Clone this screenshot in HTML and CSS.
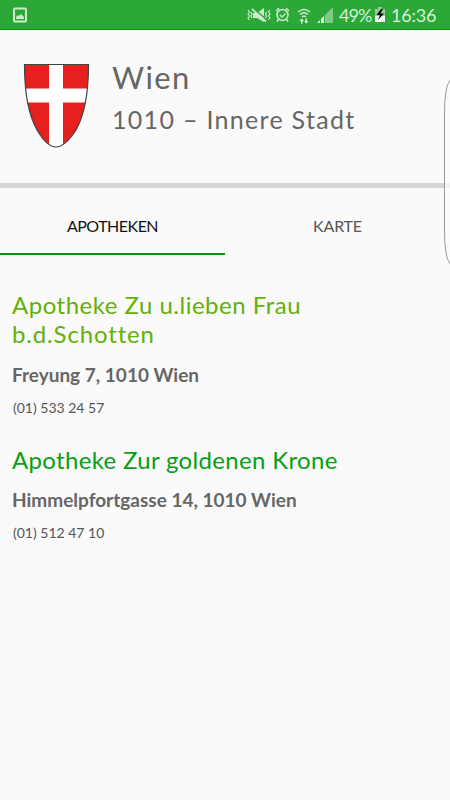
FILE: index.html
```html
<!DOCTYPE html>
<html lang="de">
<head>
<meta charset="utf-8">
<title>Apotheken Wien</title>
<link rel="stylesheet" href="styles.css">
</head>
<body>
<div class="statusbar">
  <svg class="i-pic" width="16" height="18" viewBox="0 0 16 18"><rect x="2" y="2.500" width="12" height="13" rx="1" fill="none" stroke="#cbeccb" stroke-width="2"/><path d="M4 13v-2l2-2 1 1 2-2 3 3v2z" fill="#cbeccb"/></svg>
  <div class="status-right">
    <svg width="24" height="16" viewBox="0 0 24 16" fill="#cbeccb"><path d="M6 6h4l7-5v14l-7-4H6z"/><path d="M5.500 .5L20 13" stroke="#2ba838" stroke-width="1.500"/><path d="M5 2l14 12.500" stroke="#cbeccb" stroke-width="1.700"/><path d="M1 3l1.500 2L1 7l1.500 2L1 11l1.500 2M4 5l1 2-1 2 1 2M22.500 3L21.500 5l1.500 2-1.500 2 1.500 2-1.500 2M19.500 5l-1 2 1 2-1 2" fill="none" stroke="#cbeccb" stroke-width="1.200"/></svg>
    <svg class="i-alarm" width="15" height="16" viewBox="0 0 15 16" fill="none" stroke="#cbeccb" stroke-width="1.500"><circle cx="7.500" cy="8" r="5.500"/><path d="M1 4l3-3M14 4l-3-3M3.500 12.500l-1.500 2M11.500 12.500l1.500 2M4.800 8l2.200 2 3.500-3.500"/></svg>
    <svg class="i-wifi" width="14" height="16" viewBox="0 0 14 16"><g fill="none" stroke="#cbeccb" stroke-width="1.500"><path d="M1 4q6-5 12 0M3 6.500q4-3.500 8 0M5 9q2-2 4 0"/></g><path d="M2.500 13L4.700 10.500 7 13H5.500v2.500H4V13zM7 13h1.500v-2.500H10V13h1.500l-2.200 2.500z" fill="#e4f6e5"/></svg>
    <svg class="i-signal" width="16" height="16" viewBox="0 0 16 16"><path d="M0 16L16 0v16z" fill="#80cb88"/><path d="M0 16l3-3v3zM4 16v-4l3-3v7z" fill="#d7f1d9"/><path d="M3.500 12v4M7.500 8v8" stroke="#2ba838"/></svg>
    <span class="pct">49%</span>
    <svg class="i-batt" width="10" height="15" viewBox="0 0 10 15"><path d="M3 0h4v2h3v13H0V2h3z" fill="#8ed095"/><path d="M0 9h10v6H0z" fill="#eefaee"/><path d="M6 2L1.500 8H5l-2 5 6-6.500H5.500L8 2z" fill="#000"/></svg>
    <span class="time">16:36</span>
  </div>
</div>
<header class="head">
  <svg class="crest" width="67" height="86" viewBox="0 0 67 86"><defs><clipPath id="c"><path d="M1.500 1.500H65.500C65.500 28 62 51 53 67Q42 84 33 84Q24 84 14 67C5 51 1.500 28 1.500 1.500z"/></clipPath></defs><g clip-path="url(#c)"><path d="M0 0h67v86H0z" fill="#e5201f"/><path d="M26 0h14v86H26zM0 25.500h67v14H0z" fill="#fff"/></g><path d="M1.500 1.500H65.500C65.500 28 62 51 53 67Q42 84 33 84Q24 84 14 67C5 51 1.500 28 1.500 1.500z" fill="none" stroke="#444" stroke-width="1.200"/></svg>
  <div class="place"><h1>Wien</h1><h2>1010 – Innere Stadt</h2></div>
</header>
<nav class="tabs"><div class="tab active">APOTHEKEN</div><div class="tab map">KARTE</div></nav>
<main>
  <article class="first"><h3><span class="n1">Apotheke Zu u.lieben Frau</span><br><span class="n2">b.d.Schotten</span></h3><p class="addr">Freyung 7, 1010 Wien</p><p class="tel">(01) 533 24 57</p></article>
  <article class="second"><h3><span class="n3">Apotheke Zur goldenen Krone</span></h3><p class="addr">Himmelpfortgasse 14, 1010 Wien</p><p class="tel">(01) 512 47 10</p></article>
</main>
<svg class="edge" width="7" height="186" viewBox="0 0 7 186"><path d="M7 1Q1.500 8 1.500 35V151Q1.500 178 7 185z" fill="#fcfcfc" fill-opacity=".75"/><path d="M7 1Q1.500 8 1.500 35V151Q1.500 178 7 185" fill="none" stroke="#999" stroke-width="1"/></svg>
</body>
</html>
```
FILE: styles.css
```css
* { box-sizing: border-box; margin: 0; padding: 0; }
body { width: 450px; height: 800px; overflow: hidden; position: relative; background: #fafafa; color: #666; font-family: Lato, "Liberation Sans", sans-serif; }
svg { display: block; flex: none; }
h1, h2, h3 { font-weight: 400; white-space: nowrap; }
.statusbar { height: 30px; background: #2ba838; border-bottom: 1px solid #0c9512; display: flex; justify-content: space-between; padding: 0 13px 0 12px; align-items: center; color: #d5f0d7; font-size: 18px; }
.status-right { display: flex; align-items: center; height: 30px; }
.i-alarm { margin-left: 4px; }
.i-wifi { margin-left: 7px; margin-top: 3px; }
.i-signal { margin-left: 6px; }
.pct { margin-left: 6px; width: 32px; letter-spacing: -.9px; }
.i-batt { margin-left: 4px; }
.time { margin-left: 6px; width: 46px; letter-spacing: -.2px; }
.head { height: 158px; border-bottom: 5px solid #d6d6d6; display: flex; padding: 33px 0 0 23px; }
.place { margin: -1px 0 0 22px; }
h1 { font-size: 31px; line-height: 30px; letter-spacing: 1.4px; }
h2 { font-size: 25px; line-height: 30px; margin-top: 12px; letter-spacing: 1.3px; }
.tabs { display: flex; height: 67px; }
.tab { width: 225px; text-align: center; font-size: 16px; line-height: 75px; color: #555; letter-spacing: -.5px; }
.map { letter-spacing: -.2px; }
.active { color: #111; border-bottom: 2px solid #0a960c; }
main { padding: 35px 12px 0; }
h3 { font-size: 24px; line-height: 29px; color: #63b008; }
.n1 { letter-spacing: .5px; }
.n2 { letter-spacing: .85px; }
.n3 { letter-spacing: .33px; }
.second h3 { color: #06a012; }
.addr { font-size: 19px; line-height: 24px; font-weight: 700; margin-top: 15px; }
.tel { font-size: 14px; line-height: 18px; margin: 12px 0 0 1px; color: #555; }
.second { margin-top: 28px; }
.second .addr { margin-top: 14px; }
.edge { position: absolute; right: 0; top: 79px; }
```
